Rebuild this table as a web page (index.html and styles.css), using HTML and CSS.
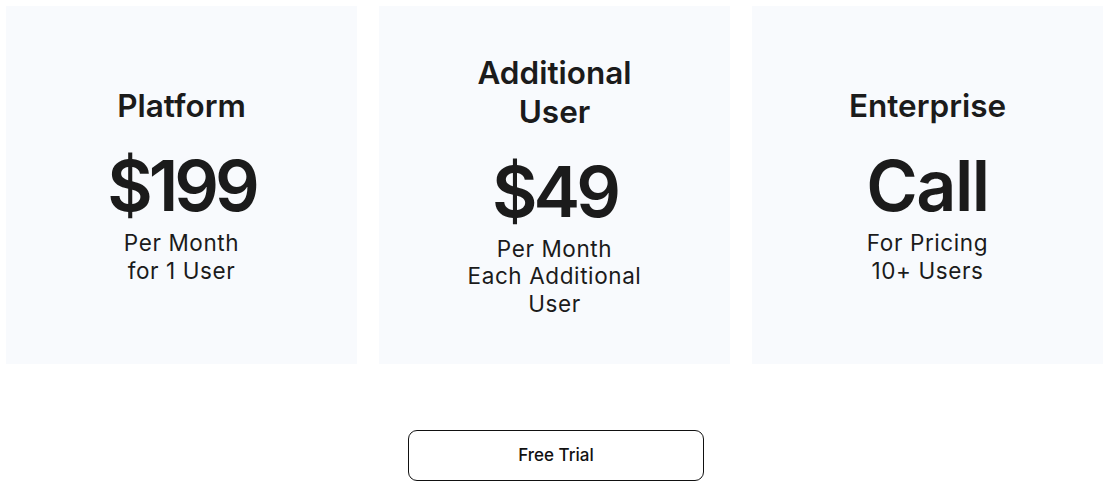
FILE: index.html
```html
<!DOCTYPE html>
<html lang="en">
<head>
<meta charset="utf-8">
<title>Pricing</title>
<link rel="stylesheet" href="styles.css">
</head>
<body>
<main class="pricing">
  <div class="cards">
    <section class="card">
      <h2 class="card-title">Platform</h2>
      <div class="card-price">$199</div>
      <p class="card-note">Per Month<br>for 1 User</p>
    </section>
    <section class="card">
      <h2 class="card-title">Additional<br>User</h2>
      <div class="card-price">$49</div>
      <p class="card-note">Per Month<br>Each Additional<br>User</p>
    </section>
    <section class="card">
      <h2 class="card-title">Enterprise</h2>
      <div class="card-price card-price--word">Call</div>
      <p class="card-note">For Pricing<br>10+ Users</p>
    </section>
  </div>
  <div class="actions">
    <a class="trial-btn" href="#">Free Trial</a>
  </div>
</main>
</body>
</html>
```
FILE: styles.css
```css
* { box-sizing: border-box; }
html, body { margin: 0; padding: 0; background: #ffffff; }
body {
  font-family: Inter, "Open Sans", "Liberation Sans", sans-serif;
  color: #1b1b1b;
}
.pricing {
  padding: 6px 5px 0 6px;
}
.cards {
  display: grid;
  grid-template-columns: repeat(3, 1fr);
  column-gap: 22px;
}
.card {
  background: #f8fafd;
  height: 358px;
  display: flex;
  flex-direction: column;
  align-items: center;
  justify-content: center;
  text-align: center;
  padding-top: 0;
}
.card-title {
  margin: 0;
  font-size: 31.5px;
  font-weight: 600;
  line-height: 39px;
}
.card-price {
  margin-top: 18px;
  font-size: 70px;
  font-weight: 600;
  line-height: 86px;
  letter-spacing: -4px;
}
.card-price--word {
  letter-spacing: -1.5px;
}
.card-note {
  margin: 0;
  font-size: 22.5px;
  font-weight: 400;
  line-height: 27.3px;
  letter-spacing: 0.6px;
}
.actions {
  display: flex;
  justify-content: center;
  padding-top: 66px;
  padding-left: 3px;
}
.trial-btn {
  display: flex;
  align-items: center;
  justify-content: center;
  width: 296px;
  height: 51px;
  border: 1.6px solid #111;
  border-radius: 9px;
  color: #111;
  text-decoration: none;
  font-size: 17px;
  font-weight: 500;
  padding-bottom: 1px;
}
```
